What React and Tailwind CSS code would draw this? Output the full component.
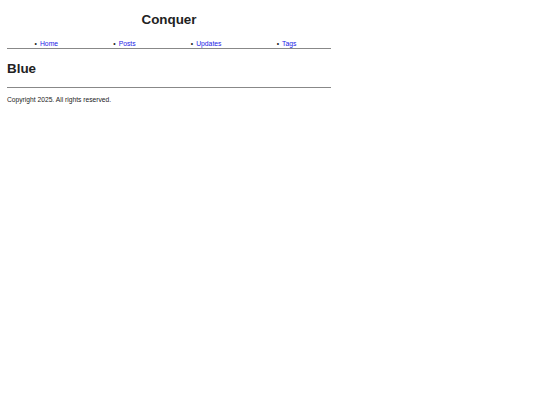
import React from "react";

const links = ["Home", "Posts", "Updates", "Tags"];

const App = () => {
  return (
    <div className="min-h-screen bg-white font-['Liberation_Sans',Arial,sans-serif] text-[#222]">
      <div className="ml-[7px] w-[324px]">
        {/* Header */}
        <h1 className="pt-[12px] text-center text-[13.4px] font-bold leading-[16px]">Conquer</h1>

        {/* Nav */}
        <ul className="mt-[12px] flex justify-around border-b border-[#888] pr-[7px] text-[6.8px] leading-[8px]">
          {links.map((link) => (
            <li key={link} className="flex items-center gap-[3px]">
              <span className="text-[#222]">•</span>
              <a href="#" className="text-[#1a1ae6]">
                {link}
              </a>
            </li>
          ))}
        </ul>

        {/* Main */}
        <h2 className="mt-[12px] text-[13.4px] font-bold leading-[16px]">Blue</h2>
        <hr className="mt-[10px] border-t border-[#888]" />

        {/* Footer */}
        <p className="mt-[8px] text-[6.7px] leading-[8px]">Copyright 2025. All rights reserved.</p>
      </div>
    </div>
  );
};

export default App;
